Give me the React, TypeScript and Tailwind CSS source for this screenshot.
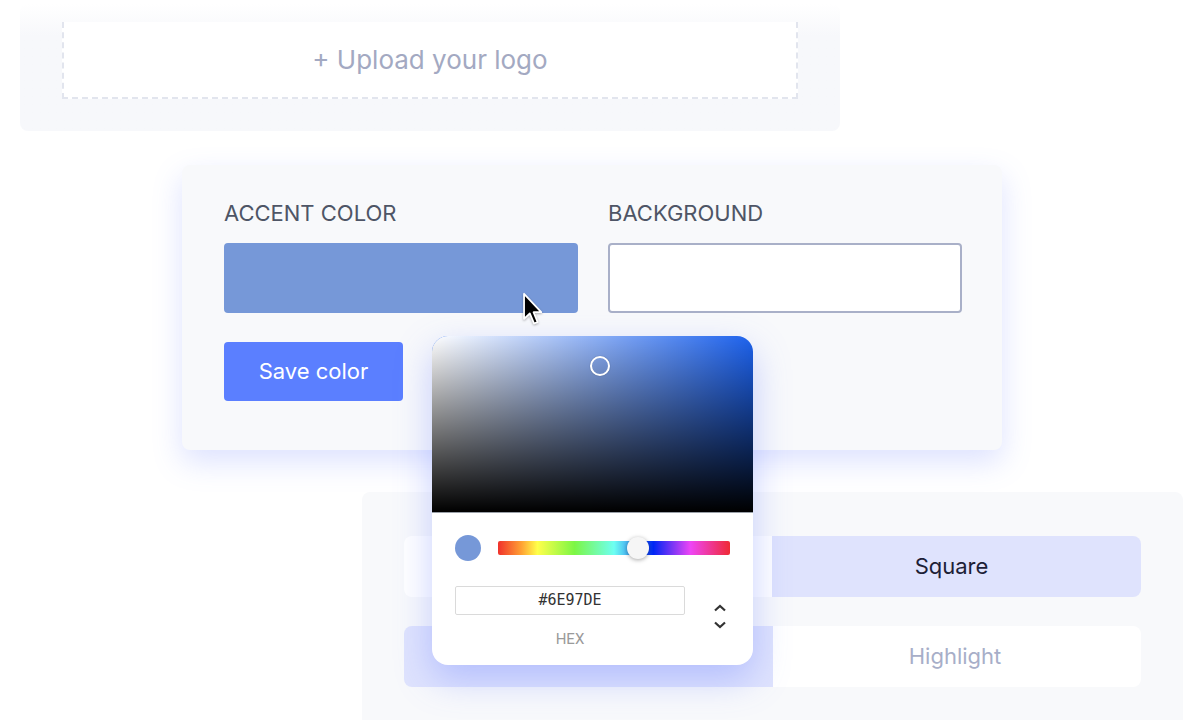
import { useState } from 'react';

const sans = "font-['Inter','Noto_Sans',sans-serif]";

function Cursor() {
  return (
    <svg width="24" height="34" viewBox="0 0 12 19" className="absolute left-[521px] top-[292px] drop-shadow-[0_1px_1px_rgba(0,0,0,0.3)]" aria-hidden="true">
      <path d="M1 1 L1 15 L4.2 12 L6.6 17.6 L8.6 16.8 L6.3 11.3 L10.6 11.3 Z" fill="#000" stroke="#fff" strokeWidth="1" strokeLinejoin="round" />
    </svg>
  );
}

function ColorPicker({ hex }: { hex: string }) {
  return (
    <div className="absolute left-[432px] top-[336px] w-[321px] h-[329px] overflow-hidden rounded-2xl bg-white shadow-[0_14px_36px_rgba(96,120,255,0.35)]">
      <div className="relative h-[177px] border-b border-[#9aa0a8] bg-[hsl(220,85%,52%)]">
        <div className="absolute inset-0 bg-gradient-to-r from-white to-transparent" />
        <div className="absolute inset-0 bg-gradient-to-b from-transparent to-black" />
        <div className="absolute left-[158px] top-[20px] h-[20px] w-[20px] rounded-full border-2 border-white shadow-[0_0_1px_rgba(0,0,0,0.5)]" />
      </div>
      <div className="flex items-center gap-[17px] px-[23px] pt-[22px]">
        <div className="h-[26px] w-[26px] shrink-0 rounded-full bg-[#7698d8]" />
        <div className="relative h-[14px] flex-1 rounded-[2px] bg-[linear-gradient(to_right,#f0322c_0%,#ffa033_10%,#ffff4a_17%,#7cf645_33%,#6dfff2_50%,#0026f5_67%,#ee45f5_83%,#ef2a34_100%)]">
          <div className="absolute left-[129px] top-[-4px] h-[22px] w-[22px] rounded-full bg-[#f6f6f6] shadow-[0_1px_4px_rgba(0,0,0,0.35)]" />
        </div>
      </div>
      <div className="flex items-start pl-[23px] pr-[25px] pt-[25px]">
        <div className="flex w-[230px] flex-col items-center">
          <div className="flex h-[29px] w-full items-center justify-center rounded-[2px] border border-[#dadada] font-['DejaVu_Sans_Mono',monospace] text-[15px] text-[#333]">
            {hex}
          </div>
          <span className="mt-[15px] font-['Roboto',sans-serif] text-[15px] leading-[18px] text-[#9a9a9a]">HEX</span>
        </div>
        <div className="ml-auto mt-[18px] flex flex-col items-center gap-[9px] pr-[1px]">
          <svg width="14" height="8" viewBox="0 0 14 8" aria-hidden="true">
            <path d="M2 6.5 L7 2 L12 6.5" fill="none" stroke="#333" strokeWidth="2.2" />
          </svg>
          <svg width="14" height="8" viewBox="0 0 14 8" aria-hidden="true">
            <path d="M2 1.5 L7 6 L12 1.5" fill="none" stroke="#333" strokeWidth="2.2" />
          </svg>
        </div>
      </div>
    </div>
  );
}

export default function App() {
  const [hex] = useState('#6E97DE');

  return (
    <div className={`relative h-[720px] w-[1184px] overflow-hidden bg-white ${sans}`}>
      {/* upload card */}
      <div className="absolute left-[20px] top-[4px] h-[127px] w-[820px] rounded-lg bg-gradient-to-b from-white to-[#f7f8fb] to-[25%] px-[42px] pt-[18px]">
        <div className="flex h-[77px] items-center justify-center border-2 border-t-0 border-dashed border-[#e2e5ee] bg-white">
          <span className="text-[26px] text-[#a3a9c2]">+ Upload your logo</span>
        </div>
      </div>

      {/* color card */}
      <div className="absolute left-[182px] top-[165px] h-[285px] w-[820px] rounded-lg bg-[#f8f9fb] px-[42px] pt-[35px] shadow-[0_12px_30px_rgba(100,122,255,0.22)]">
        <div className="grid grid-cols-[354px_354px] gap-x-[30px]">
          <div>
            <p className="text-[22px] leading-[26px] text-[#4e5566]">ACCENT COLOR</p>
            <div className="mt-[17px] h-[70px] rounded-[4px] bg-[#7698d8]" />
          </div>
          <div>
            <p className="text-[22px] leading-[26px] text-[#4e5566]">BACKGROUND</p>
            <div className="mt-[17px] h-[70px] rounded-[4px] border-2 border-[#a9b0c8] bg-white" />
          </div>
        </div>
        <button type="button" className="mt-[29px] h-[59px] w-[179px] rounded-[4px] bg-[#5b7fff] text-[22px] text-white">
          Save color
        </button>
      </div>

      {/* style card */}
      <div className="absolute left-[362px] top-[492px] h-[240px] w-[821px] rounded-lg bg-[#f8f9fb] pl-[42px] pt-[44px]">
        <div className="flex w-[737px] flex-col gap-[29px]">
          <div className="flex h-[61px] overflow-hidden rounded-lg">
            <div className="w-[368px] bg-white" />
            <div className="flex flex-1 items-center justify-center pr-[10px] bg-[#dfe3fd] text-[22px] text-[#1c2036]">Square</div>
          </div>
          <div className="flex h-[61px] overflow-hidden rounded-lg">
            <div className="w-[369px] bg-[#dfe3fd]" />
            <div className="flex flex-1 items-center justify-center pr-[4px] bg-white text-[22px] text-[#a7aec8]">Highlight</div>
          </div>
        </div>
      </div>

      <ColorPicker hex={hex} />
      <Cursor />
    </div>
  );
}
